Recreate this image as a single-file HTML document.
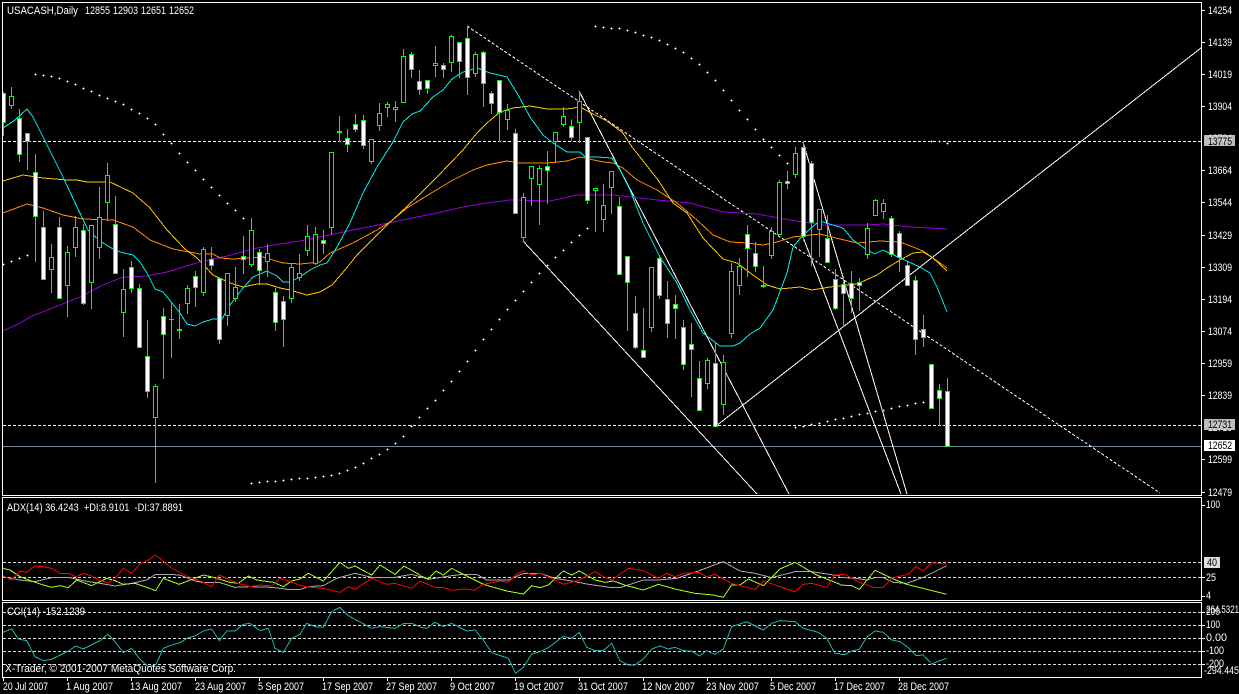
<!DOCTYPE html>
<html><head><meta charset="utf-8"><title>USACASH,Daily</title>
<style>
html,body{margin:0;padding:0;background:#000;width:1239px;height:694px;overflow:hidden}
svg{display:block;position:absolute;left:0;top:0}
text{font-family:"Liberation Sans",sans-serif;font-size:11px;fill:#fff;white-space:pre}
polyline,path,line{shape-rendering:crispEdges}
.n{vector-effect:non-scaling-stroke;fill:none;stroke-width:1}
.k{fill:#000}
</style></head>
<body>
<svg width="1239" height="694" viewBox="0 0 1239 694" xmlns="http://www.w3.org/2000/svg">
<defs>
<marker id="d" markerUnits="userSpaceOnUse" markerWidth="3" markerHeight="3" refX="1" refY="1" overflow="visible"><path d="M0 1.5h3M1.5 0v3" stroke="#808080" fill="none"/><path d="M1 1.5h1" stroke="#fff"/></marker>
<clipPath id="m"><rect x="3" y="3" width="1198" height="492"/></clipPath>
</defs>
<rect width="1239" height="694" fill="#000"/>

<g clip-path="url(#m)">
<!-- level lines -->
<path d="M3 141.5H1201M3 425.5H1201" stroke="#fff" stroke-dasharray="3 2" fill="none"/>
<path d="M3 446.5H1201" stroke="#778899" fill="none"/>
<!-- objects -->
<line x1="467" y1="26" x2="1160" y2="493" stroke="#fff" stroke-dasharray="3 2"/>
<line x1="523" y1="241" x2="757" y2="494" stroke="#fff"/>
<line x1="579" y1="91" x2="789" y2="494" stroke="#fff"/>
<line x1="803" y1="142" x2="907" y2="494" stroke="#fff"/>
<line x1="803" y1="237" x2="901" y2="494" stroke="#fff"/>
<line x1="716" y1="426" x2="1201" y2="48" stroke="#fff"/>
<!-- SAR -->
<g fill="none" stroke="none">
<polyline marker-start="url(#d)" marker-mid="url(#d)" marker-end="url(#d)" points="3,264 11,261 19,258 27,255"/>
<polyline marker-start="url(#d)" marker-mid="url(#d)" marker-end="url(#d)" points="35,74 43,75 51,76 59,78 67,81 75,84 83,88 91,91 99,95 107,98 115,101 123,104 131,109 139,113 147,118 155,124 163,134 171,143 179,153 187,162 195,170 203,179 211,187 219,195 227,203 235,210 243,218"/>
<polyline marker-start="url(#d)" marker-mid="url(#d)" marker-end="url(#d)" points="251,483 259,482 267,481 275,481 283,480 291,479 299,478 307,478 315,477 323,476 331,475 339,473 347,470 355,467 363,463 371,458 379,454 387,449 395,443 403,436 411,426 419,417 427,408 435,400 443,390 451,381 459,371 467,361 475,350 483,339 491,329 499,319 507,309 515,300 523,291 531,282 539,273 547,265 555,257 563,250 571,242 579,235 587,228"/>
<polyline marker-start="url(#d)" marker-mid="url(#d)" marker-end="url(#d)" points="595,26 603,27 611,28 619,28 627,30 635,32 643,35 651,37 659,40 667,44 675,48 683,52 691,58 699,64 707,72 715,80 723,90 731,100 739,110 747,119 755,129 763,139 771,147 779,155 787,163"/>
<polyline marker-start="url(#d)" marker-mid="url(#d)" marker-end="url(#d)" points="931,141 939,141 947,143"/>
<polyline marker-start="url(#d)" marker-mid="url(#d)" marker-end="url(#d)" points="795,427 803,426 811,424 819,423 827,421 835,419 843,418 851,416 859,414 867,413 875,411 883,410 891,408 899,406 907,405 915,403 923,402"/>
</g>
<!-- purple -->
<polyline fill="none" stroke="#9400d3" points="3,331 20,323 32,316 60,305 80,297 103,285 123,277 147,276 167,272 200,262 227,256 257,248 280,244 300,241 320,237 353,230 393,222 437,213 463,207 487,203 510,200 550,201 577,195 613,195 639,198 657,200 690,203 723,212 757,214 790,220 823,225 867,225 883,224 910,227 947,229"/>
<!-- orange -->
<polyline fill="none" stroke="#ff8c00" points="3,213 27,204 43,208 63,215 83,219 113,220 133,227 150,240 173,249 200,254 213,254 220,258 233,259 250,258 263,257 283,263 300,264 320,262 330,253 353,243 377,230 390,222 407,208 433,192 453,180 473,170 487,165 507,161 520,163 547,163 567,161 580,157 603,162 613,163 623,168 637,180 657,190 677,203 697,220 713,235 730,242 747,243 763,245 777,242 793,237 820,234 840,239 857,243 880,241 900,242 913,247 923,251 933,258 947,268"/>
<!-- yellow -->
<polyline fill="none" stroke="#ffc800" points="3,181 23,175 43,178 67,180 77,180 87,182 110,182 133,193 150,208 167,230 185,249 197,258 213,275 230,283 243,287 257,284 267,284 280,288 290,290 300,293 307,295 320,292 332,285 345,270 357,255 370,242 387,225 400,213 417,197 437,177 463,150 477,133 487,123 500,112 513,108 530,106 547,109 567,109 580,107 593,114 607,121 623,133 632,147 640,157 658,180 673,203 687,213 703,238 723,259 737,263 753,275 767,285 780,289 800,287 812,290 830,287 857,284 877,275 887,268 900,260 913,253 923,252 933,258 947,271"/>
<!-- cyan -->
<polyline fill="none" stroke="#00f0f0" points="3,128 15,120 27,109 33,117 43,137 53,157 63,177 77,207 88,230 100,241 113,249 120,252 133,255 140,262 147,273 155,289 163,292 172,303 180,313 187,324 195,326 203,322 213,319 222,319 230,305 243,288 253,277 267,271 277,276 283,282 290,282 300,277 310,270 320,265 327,263 337,247 350,223 363,193 377,167 393,142 403,122 412,114 420,111 433,97 443,90 452,79 463,72 477,68 490,73 507,77 517,93 530,117 543,135 553,143 567,152 580,152 585,157 597,157 612,158 620,170 630,190 643,223 660,257 677,283 690,310 703,333 720,346 733,346 740,343 750,334 760,328 773,310 787,273 793,247 803,235 817,223 823,222 843,228 853,240 867,250 875,254 883,250 900,258 920,267 930,273 937,287 947,312"/>

<!-- candles -->
<path fill="none" stroke="#00ff00" d="M3.5 92V136M11.5 87V109M19.5 109V162M27.5 133V170M35.5 154V262M43.5 211V279M51.5 244V293M59.5 217V298M67.5 246V317M75.5 216V257M83.5 224V305M91.5 225V309M99.5 187V259M107.5 163V221M115.5 196V273M123.5 269V337M131.5 261V293M139.5 284V347M147.5 320V398M155.5 384V483M163.5 308V379M171.5 303V358M179.5 304V339M187.5 285V314M195.5 271V307M203.5 247V296M211.5 247V270M219.5 278V344M227.5 273V326M235.5 267V302M243.5 236V274M251.5 218V267M259.5 249V285M267.5 244V277M275.5 288V331M283.5 296V347M291.5 264V303M299.5 254V281M307.5 225V256M315.5 227V265M323.5 230V254M331.5 152V235M339.5 116V142M347.5 129V152M355.5 114V132M363.5 115V149M371.5 139V164M379.5 103V131M387.5 102V117M395.5 101V122M403.5 49V103M411.5 52V78M419.5 70V95M427.5 80V94M435.5 46V77M443.5 63V78M451.5 35V72M459.5 42V78M467.5 26V95M475.5 52V77M483.5 51V107M491.5 91V114M499.5 80V142M507.5 104V130M515.5 129V214M523.5 193V242M531.5 166V206M539.5 165V225M547.5 151V204M555.5 132V163M563.5 107V127M571.5 120V141M579.5 91V143M587.5 137V204M595.5 188V232M603.5 184V232M611.5 171V214M619.5 197V275M627.5 256V331M635.5 296V349M643.5 308V357M651.5 267V332M659.5 255V299M667.5 281V338M675.5 295V339M683.5 320V370M691.5 323V397M699.5 361V411M707.5 358V389M715.5 342V427M723.5 355V415M731.5 263V338M739.5 258V295M747.5 225V277M755.5 242V272M763.5 266V288M771.5 227V259M779.5 180V234M787.5 171V189M795.5 147V178M803.5 141V241M811.5 161V266M819.5 209V257M827.5 215V263M835.5 269V310M843.5 276V327M851.5 271V313M859.5 278V311M867.5 223V259M875.5 199V216M883.5 199V219M891.5 216V257M899.5 231V272M907.5 262V286M915.5 276V355M923.5 315V347M931.5 364V409M939.5 384V426M947.5 378V446M169 319.5H174"/>
<path fill="#000" stroke="#00ff00" d="M9.5 96.5h4v9h-4zM49.5 257.5h4v12h-4zM65.5 252.5h4v33h-4zM73.5 227.5h4v20h-4zM89.5 225.5h4v57h-4zM97.5 217.5h4v30h-4zM105.5 175.5h4v27h-4zM121.5 289.5h4v23h-4zM153.5 386.5h4v31h-4zM185.5 288.5h4v15h-4zM201.5 249.5h4v43h-4zM225.5 273.5h4v42h-4zM233.5 287.5h4v11h-4zM249.5 230.5h4v34h-4zM265.5 253.5h4v8h-4zM289.5 267.5h4v31h-4zM297.5 273.5h4v4h-4zM305.5 236.5h4v14h-4zM313.5 234.5h4v29h-4zM329.5 152.5h4v75h-4zM337.5 131.5h4v1h-4zM369.5 139.5h4v22h-4zM377.5 113.5h4v12h-4zM385.5 104.5h4v3h-4zM393.5 107.5h4v2h-4zM401.5 56.5h4v46h-4zM433.5 63.5h4v2h-4zM449.5 36.5h4v26h-4zM473.5 54.5h4v19h-4zM505.5 110.5h4v9h-4zM521.5 197.5h4v40h-4zM529.5 166.5h4v12h-4zM537.5 168.5h4v16h-4zM553.5 132.5h4v9h-4zM561.5 116.5h4v8h-4zM577.5 101.5h4v21h-4zM593.5 188.5h4v2h-4zM601.5 205.5h4v14h-4zM609.5 171.5h4v16h-4zM649.5 267.5h4v60h-4zM705.5 360.5h4v23h-4zM721.5 362.5h4v42h-4zM729.5 271.5h4v62h-4zM737.5 266.5h4v19h-4zM761.5 285.5h4v1h-4zM769.5 231.5h4v24h-4zM777.5 182.5h4v52h-4zM793.5 153.5h4v21h-4zM817.5 209.5h4v20h-4zM865.5 228.5h4v26h-4zM873.5 200.5h4v15h-4zM881.5 203.5h4v8h-4z"/>
<path fill="#fff" stroke="#00ff00" d="M1.5 93.5h4v29h-4zM17.5 118.5h4v36h-4zM25.5 133.5h4v8h-4zM33.5 172.5h4v44h-4zM41.5 227.5h4v52h-4zM57.5 227.5h4v71h-4zM81.5 230.5h4v73h-4zM113.5 224.5h4v49h-4zM129.5 267.5h4v21h-4zM137.5 288.5h4v59h-4zM145.5 356.5h4v35h-4zM161.5 316.5h4v18h-4zM177.5 329.5h4v1h-4zM193.5 276.5h4v11h-4zM209.5 259.5h4v6h-4zM217.5 278.5h4v61h-4zM241.5 256.5h4v3h-4zM257.5 252.5h4v18h-4zM273.5 292.5h4v30h-4zM281.5 301.5h4v18h-4zM321.5 240.5h4v3h-4zM345.5 138.5h4v6h-4zM353.5 124.5h4v5h-4zM361.5 120.5h4v25h-4zM409.5 54.5h4v15h-4zM417.5 81.5h4v8h-4zM425.5 80.5h4v8h-4zM441.5 65.5h4v4h-4zM457.5 42.5h4v19h-4zM465.5 38.5h4v39h-4zM481.5 52.5h4v31h-4zM489.5 93.5h4v10h-4zM497.5 80.5h4v32h-4zM513.5 133.5h4v80h-4zM545.5 166.5h4v4h-4zM569.5 126.5h4v11h-4zM585.5 137.5h4v63h-4zM617.5 206.5h4v68h-4zM625.5 256.5h4v26h-4zM633.5 313.5h4v34h-4zM641.5 350.5h4v7h-4zM657.5 258.5h4v37h-4zM665.5 299.5h4v24h-4zM673.5 304.5h4v4h-4zM681.5 327.5h4v37h-4zM689.5 344.5h4v5h-4zM697.5 378.5h4v32h-4zM713.5 363.5h4v63h-4zM745.5 234.5h4v14h-4zM753.5 253.5h4v13h-4zM785.5 181.5h4v2h-4zM801.5 147.5h4v89h-4zM809.5 163.5h4v59h-4zM825.5 238.5h4v24h-4zM833.5 279.5h4v29h-4zM841.5 284.5h4v9h-4zM849.5 283.5h4v15h-4zM857.5 282.5h4v3h-4zM889.5 218.5h4v36h-4zM897.5 233.5h4v24h-4zM905.5 265.5h4v20h-4zM913.5 280.5h4v59h-4zM921.5 329.5h4v8h-4zM929.5 364.5h4v44h-4zM937.5 390.5h4v8h-4zM945.5 391.5h4v55h-4z"/>
</g>

<!-- indicator levels -->
<path d="M3 562.5H1201M3 577.5H1201M3 612.5H1201M3 625.5H1201M3 638.5H1201M3 651.5H1201M3 664.5H1201" stroke="#ddd" stroke-dasharray="3 2" fill="none"/>

<!-- ADX + CCI, coords from 3x grid -->
<g transform="translate(0,495) scale(.33333)">
<polyline class="n" stroke="#aaa" points="8,245 60,255 105,260 155,248 205,247 250,257 300,265 345,273 395,265 440,255 467,238 500,238 540,240 585,258 610,263 660,263 705,277 750,275 815,277 870,284 900,284 925,275 970,272 1010,250 1065,235 1115,247 1185,247 1235,238 1260,245"/>
<polyline class="n" stroke="#a6ff10" points="8,220 30,225 60,245 100,260 130,270 155,277 180,272 205,278 230,255 275,272 320,250 345,257 370,268 405,265 440,277 467,287 490,250 537,268 585,250 610,240 640,247 690,262 715,265 745,243 770,255 820,262 850,275 875,258 900,252 925,235 970,258 1020,202 1045,220 1065,213 1115,240 1140,210 1185,238 1212,213 1260,240"/>
<polyline class="n" stroke="#f00" points="8,242 35,255 60,228 80,232 105,213 130,215 155,220 180,235 205,235 228,245 250,235 275,243 300,257 325,263 345,250 370,220 395,235 420,207 445,195 467,180 515,220 565,245 610,262 635,275 658,240 690,255 715,265 750,275 780,270 815,273 840,250 875,262 915,275 970,280 1020,292 1045,275 1065,283 1115,250 1160,268 1185,265 1235,280 1260,258"/>
<polyline class="n" stroke="#20b2aa" points="8,412 35,402 55,432 80,437 105,485 130,497 155,493 205,468 228,453 250,462 300,437 323,418 345,440 370,473 395,460 420,493 445,515 467,510 490,460 515,450 540,443 565,428 585,423 610,408 635,402 658,437 680,408 705,408 730,388 750,385 780,407 805,400 825,460 850,472 875,430 900,418 920,385 945,395 970,397 995,350 1020,337 1045,362 1115,400 1140,395 1185,400 1212,385 1235,385 1260,395"/>
</g>
<g transform="translate(420,495) scale(.33333)">
<polyline class="n" stroke="#aaa" points="0,245 25,253 95,242 130,238 170,238 200,255 265,255 310,235 360,235 405,250 455,258 500,267 575,278 600,278 670,255 715,255 770,250 835,228 910,200 960,228 1005,235 1055,248 1125,230 1175,230 1260,243"/>
<polyline class="n" stroke="#a6ff10" points="0,242 25,252 48,228 70,240 95,220 130,238 190,268 260,288 310,297 335,272 360,278 385,270 430,228 455,240 478,228 525,255 555,262 580,258 620,272 670,285 715,268 765,282 825,295 880,300 910,307 935,270 960,270 985,252 1030,272 1080,222 1125,202 1190,240 1260,268"/>
<polyline class="n" stroke="#f00" points="0,258 45,277 70,277 95,286 130,282 165,285 190,268 240,258 265,262 290,237 310,227 335,240 360,235 405,255 430,268 478,255 525,230 550,245 575,255 625,220 670,227 715,250 740,235 765,245 790,235 835,232 860,245 885,238 935,265 960,272 1005,283 1030,258 1080,275 1125,290 1150,268 1175,265 1220,277 1245,240 1260,240"/>
<polyline class="n" stroke="#20b2aa" points="0,397 20,400 45,382 70,395 95,385 140,408 165,405 190,435 215,473 265,490 287,535 310,517 335,477 360,470 385,458 430,424 455,430 478,412 500,457 525,467 550,467 575,445 600,497 625,510 645,510 670,492 695,462 720,453 745,462 765,457 790,467 815,468 838,483 860,467 885,478 910,462 935,395 980,380 1030,405 1055,385 1080,377 1125,380 1150,400 1195,412 1220,430 1245,475 1260,475"/>
</g>
<g transform="translate(840,495) scale(.33333)">
<polyline class="n" stroke="#aaa" points="0,247 50,250 80,255 105,248 130,248 160,262 200,265 250,247 320,212"/>
<polyline class="n" stroke="#a6ff10" points="0,270 35,272 58,283 105,226 160,252 200,268 320,298"/>
<polyline class="n" stroke="#f00" points="0,238 15,238 50,258 100,277 130,277 155,250 205,237 228,215 250,228 275,203 320,208"/>
<polyline class="n" stroke="#20b2aa" points="0,478 15,478 35,468 58,463 80,427 105,408 130,412 155,435 180,440 205,458 228,482 250,480 275,507 300,497 320,490"/>
</g>

<!-- frames -->
<path fill="none" stroke="#fff" d="M2.5 2.5H1201.5V495.5H2.5ZM2.5 497.5H1201.5V600.5H2.5ZM2.5 602.5H1201.5V677.5H2.5Z"/>
<!-- ticks -->
<path fill="none" stroke="#fff" d="M1202 10.5h3M1202 42.5h3M1202 74.5h3M1202 106.5h3M1202 170.5h3M1202 202.5h3M1202 235.5h3M1202 267.5h3M1202 299.5h3M1202 331.5h3M1202 363.5h3M1202 395.5h3M1202 459.5h3M1202 492.5h3M1202 505.5h3M1202 577.5h3M1202 596.5h3M1202 612.5h3M1202 625.5h3M1202 638.5h3M1202 651.5h3M1202 664.5h3M3.5 678v3M67.5 678v3M131.5 678v3M195.5 678v3M259.5 678v3M323.5 678v3M387.5 678v3M451.5 678v3M515.5 678v3M579.5 678v3M643.5 678v3M707.5 678v3M771.5 678v3M835.5 678v3M899.5 678v3"/>

<!-- header texts -->
<text x="7" y="14" textLength="71" lengthAdjust="spacingAndGlyphs">USACASH,Daily</text>
<text x="85" y="14" textLength="25" lengthAdjust="spacingAndGlyphs">12855</text>
<text x="113" y="14" textLength="25" lengthAdjust="spacingAndGlyphs">12903</text>
<text x="141" y="14" textLength="25" lengthAdjust="spacingAndGlyphs">12651</text>
<text x="169" y="14" textLength="25" lengthAdjust="spacingAndGlyphs">12652</text>
<text x="7" y="511" textLength="176" lengthAdjust="spacingAndGlyphs">ADX(14) 36.4243  +DI:8.9101  -DI:37.8891</text>
<text x="7" y="615" textLength="78" lengthAdjust="spacingAndGlyphs">CCI(14) -152.1239</text>
<text x="5" y="672" textLength="231" lengthAdjust="spacingAndGlyphs">X-Trader, © 2001-2007 MetaQuotes Software Corp.</text>

<!-- price axis -->
<g>
<text x="1208" y="14" textLength="24" lengthAdjust="spacingAndGlyphs">14254</text>
<text x="1208" y="46" textLength="24" lengthAdjust="spacingAndGlyphs">14139</text>
<text x="1208" y="78" textLength="24" lengthAdjust="spacingAndGlyphs">14019</text>
<text x="1208" y="110" textLength="24" lengthAdjust="spacingAndGlyphs">13904</text>
<text x="1208" y="142" textLength="24" lengthAdjust="spacingAndGlyphs">13784</text>
<text x="1208" y="174" textLength="24" lengthAdjust="spacingAndGlyphs">13664</text>
<text x="1208" y="206" textLength="24" lengthAdjust="spacingAndGlyphs">13544</text>
<text x="1208" y="239" textLength="24" lengthAdjust="spacingAndGlyphs">13429</text>
<text x="1208" y="271" textLength="24" lengthAdjust="spacingAndGlyphs">13309</text>
<text x="1208" y="303" textLength="24" lengthAdjust="spacingAndGlyphs">13194</text>
<text x="1208" y="335" textLength="24" lengthAdjust="spacingAndGlyphs">13074</text>
<text x="1208" y="367" textLength="24" lengthAdjust="spacingAndGlyphs">12959</text>
<text x="1208" y="399" textLength="24" lengthAdjust="spacingAndGlyphs">12839</text>
<text x="1208" y="431" textLength="24" lengthAdjust="spacingAndGlyphs">12719</text>
<text x="1208" y="463" textLength="24" lengthAdjust="spacingAndGlyphs">12599</text>
<text x="1208" y="496" textLength="24" lengthAdjust="spacingAndGlyphs">12479</text>
</g>
<rect x="1204" y="135" width="31" height="11" fill="#ddd" fill-opacity=".85"/>
<text x="1208" y="145" textLength="24" lengthAdjust="spacingAndGlyphs" style="fill:#000">13775</text>
<rect x="1204" y="419" width="31" height="11" fill="#ddd" fill-opacity=".85"/>
<text x="1208" y="428" textLength="24" lengthAdjust="spacingAndGlyphs" style="fill:#000">12731</text>
<rect x="1204" y="440" width="31" height="11" fill="#fff"/>
<text x="1208" y="449" textLength="24" lengthAdjust="spacingAndGlyphs" style="fill:#000">12652</text>

<!-- indicator axis -->
<text x="1206" y="508" textLength="14" lengthAdjust="spacingAndGlyphs">100</text>
<rect x="1204" y="557" width="16" height="11" fill="#ddd"/>
<text x="1207" y="566" textLength="10" lengthAdjust="spacingAndGlyphs" style="fill:#000">40</text>
<text x="1206" y="581" textLength="10" lengthAdjust="spacingAndGlyphs">25</text>
<text x="1206" y="599" textLength="5" lengthAdjust="spacingAndGlyphs">4</text>
<text x="1206" y="613" textLength="33" lengthAdjust="spacingAndGlyphs">264.5321</text>
<text x="1206" y="615" textLength="14" lengthAdjust="spacingAndGlyphs">200</text>
<text x="1206" y="628" textLength="14" lengthAdjust="spacingAndGlyphs">100</text>
<text x="1206" y="641" textLength="21" lengthAdjust="spacingAndGlyphs">0.00</text>
<text x="1206" y="654" textLength="18" lengthAdjust="spacingAndGlyphs">-100</text>
<text x="1206" y="667" textLength="18" lengthAdjust="spacingAndGlyphs">-200</text>
<text x="1204" y="674" textLength="35" lengthAdjust="spacingAndGlyphs">-294.445</text>

<!-- date axis -->
<text x="3" y="690" textLength="45" lengthAdjust="spacingAndGlyphs">20 Jul 2007</text>
<text x="66" y="690" textLength="47" lengthAdjust="spacingAndGlyphs">1 Aug 2007</text>
<text x="130" y="690" textLength="52" lengthAdjust="spacingAndGlyphs">13 Aug 2007</text>
<text x="195" y="690" textLength="51" lengthAdjust="spacingAndGlyphs">23 Aug 2007</text>
<text x="258" y="690" textLength="46" lengthAdjust="spacingAndGlyphs">5 Sep 2007</text>
<text x="322" y="690" textLength="51" lengthAdjust="spacingAndGlyphs">17 Sep 2007</text>
<text x="386" y="690" textLength="51" lengthAdjust="spacingAndGlyphs">27 Sep 2007</text>
<text x="450" y="690" textLength="45" lengthAdjust="spacingAndGlyphs">9 Oct 2007</text>
<text x="514" y="690" textLength="50" lengthAdjust="spacingAndGlyphs">19 Oct 2007</text>
<text x="578" y="690" textLength="50" lengthAdjust="spacingAndGlyphs">31 Oct 2007</text>
<text x="642" y="690" textLength="53" lengthAdjust="spacingAndGlyphs">12 Nov 2007</text>
<text x="706" y="690" textLength="53" lengthAdjust="spacingAndGlyphs">23 Nov 2007</text>
<text x="770" y="690" textLength="46" lengthAdjust="spacingAndGlyphs">5 Dec 2007</text>
<text x="834" y="690" textLength="51" lengthAdjust="spacingAndGlyphs">17 Dec 2007</text>
<text x="898" y="690" textLength="51" lengthAdjust="spacingAndGlyphs">28 Dec 2007</text>
</svg>
</body></html>
